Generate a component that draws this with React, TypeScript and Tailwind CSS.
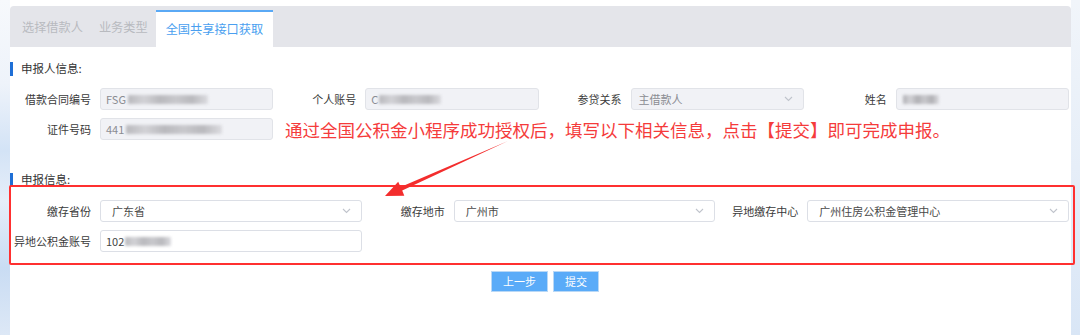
import React from "react";

const FONT = { fontFamily: '"Noto Sans CJK SC", "Noto Sans", sans-serif' };

function Chevron() {
  return (
    <svg width="9" height="6" viewBox="0 0 9 6" className="shrink-0">
      <path d="M1 1 L4.5 4.5 L8 1" fill="none" stroke="#c0c4cc" strokeWidth="1.1" />
    </svg>
  );
}

function Blur({ w, tone = "#b9b9bd" }: { w: number; tone?: string }) {
  return (
    <span
      className="inline-block h-[9px] blur-[1.5px] rounded-[1px]"
      style={{
        width: w,
        background: `linear-gradient(90deg, ${tone} 0%, #d2d2d6 20%, ${tone} 40%, #c8c8cc 60%, ${tone} 80%, #dcdce0 100%)`,
      }}
    />
  );
}

function Field({
  label,
  children,
  disabled = true,
  select = false,
}: {
  label: string;
  children?: React.ReactNode;
  disabled?: boolean;
  select?: boolean;
}) {
  return (
    <div className="flex items-center min-w-0">
      <div className="w-[81px] shrink-0 text-right text-[11px] text-[#3a3a3a] whitespace-nowrap leading-none">
        {label}
      </div>
      <div
        className={
          "ml-[9px] mr-[2px] flex-1 h-[22px] flex items-center pl-[5px] pr-[10px] rounded-[3px] border text-[11px] leading-none " +
          (disabled
            ? "bg-[#f1f2f6] border-[#e1e3e8] text-[#8a8c92]"
            : "bg-white border-[#dcdfe6] text-[#4a4a4a]")
        }
      >
        <div className="flex-1 flex items-center min-w-0 whitespace-nowrap">{children}</div>
        {select && <Chevron />}
      </div>
    </div>
  );
}

function SectionHeader({ title }: { title: string }) {
  return (
    <div className="flex items-center h-[14px]">
      <div className="w-[3px] h-[14px] bg-[#1f6fd6]" />
      <div className="ml-[8px] text-[11.5px] text-[#333] leading-none">{title}</div>
    </div>
  );
}

export default function App() {
  return (
    <div className="relative w-[1080px] h-[335px] overflow-hidden bg-white flex" style={FONT}>
      {/* left decorative strip */}
      <div className="w-[10px] shrink-0 bg-[linear-gradient(180deg,#f7f9fc_0%,#eef3fa_25%,#d3e3f6_45%,#e6eef9_60%,#c9dcf3_80%,#dde8f6_100%)]" />

      {/* main panel */}
      <div className="w-[1061px] shrink-0 flex flex-col pt-[6px] bg-white">
        {/* tab bar */}
        <div className="h-[41px] bg-[#e4e5ea] rounded-t-[4px] flex items-end pl-[4px]">
          <div className="h-[37px] px-[8px] flex items-center pb-[3px] text-[12.2px] text-[#b8babf] leading-none">选择借款人</div>
          <div className="h-[37px] px-[8px] flex items-center pb-[3px] text-[12.2px] text-[#b8babf] leading-none">业务类型</div>
          <div className="h-[37px] px-[10px] flex items-center bg-white border-t-2 border-[#5aa9f5] text-[12.2px] text-[#4a9ff0] leading-none">
            全国共享接口获取
          </div>
        </div>

        {/* section 1 */}
        <div className="mt-[15px]">
          <SectionHeader title="申报人信息:" />
        </div>

        <div className="mt-[12px] grid grid-cols-4">
          <Field label="借款合同编号">
            <span className="mr-[2px]">FSG</span>
            <Blur w={80} />
          </Field>
          <Field label="个人账号">
            <span className="mr-[1px]">C</span>
            <Blur w={62} />
          </Field>
          <Field label="参贷关系" select>
            <span className="ml-[2px]">主借款人</span>
          </Field>
          <Field label="姓名">
            <span className="ml-[1px]" />
            <Blur w={36} tone="#b0b0b4" />
          </Field>
        </div>

        <div className="mt-[8px] grid grid-cols-4">
          <Field label="证件号码">
            <span className="mr-[2px]">441</span>
            <Blur w={96} />
          </Field>
        </div>

        {/* section 2 */}
        <div className="mt-[33px]">
          <SectionHeader title="申报信息:" />
        </div>

        <div className="mt-[13px] grid grid-cols-3">
          <Field label="缴存省份" select disabled={false}>
            <span className="ml-[6px]">广东省</span>
          </Field>
          <Field label="缴存地市" select disabled={false}>
            <span className="ml-[6px]">广州市</span>
          </Field>
          <Field label="异地缴存中心" select disabled={false}>
            <span className="ml-[6px]">广州住房公积金管理中心</span>
          </Field>
        </div>

        <div className="mt-[8px] grid grid-cols-3">
          <Field label="异地公积金账号" disabled={false}>
            <span className="mr-[1px] text-[#444]">102</span>
            <Blur w={46} />
          </Field>
        </div>

        {/* buttons */}
        <div className="mt-[19px] flex justify-center gap-[5px] pl-[9px]">
          <button className="w-[57px] h-[21px] bg-[#5aabf8] border border-[#b9d8f6] text-white text-[11px] leading-none flex items-center justify-center">
            上一步
          </button>
          <button className="w-[46px] h-[21px] bg-[#5aabf8] border border-[#b9d8f6] text-white text-[11px] leading-none flex items-center justify-center">
            提交
          </button>
        </div>
      </div>

      {/* right strip */}
      <div className="flex-1 bg-[linear-gradient(180deg,#f1f5fa_0%,#e6eef8_50%,#d9e6f6_100%)]" />

      {/* annotation overlays */}
      <div className="absolute left-[285px] top-[119px] text-[17.5px] leading-[22px] text-[#f53b3b] whitespace-nowrap">
        通过全国公积金小程序成功授权后，填写以下相关信息，点击【提交】即可完成申报。
      </div>
      <div className="absolute left-[9px] top-[185px] w-[1066px] h-[80px] border-2 border-[#ff3030] rounded-[2px] pointer-events-none" />
      <svg className="absolute left-0 top-0 pointer-events-none" width="1080" height="335">
        <polygon
          points="508,141 402.2,190.5 404.3,195.8 385,196 398.2,181.8 400.6,186.9"
          fill="#f32d2d"
        />
      </svg>
    </div>
  );
}
